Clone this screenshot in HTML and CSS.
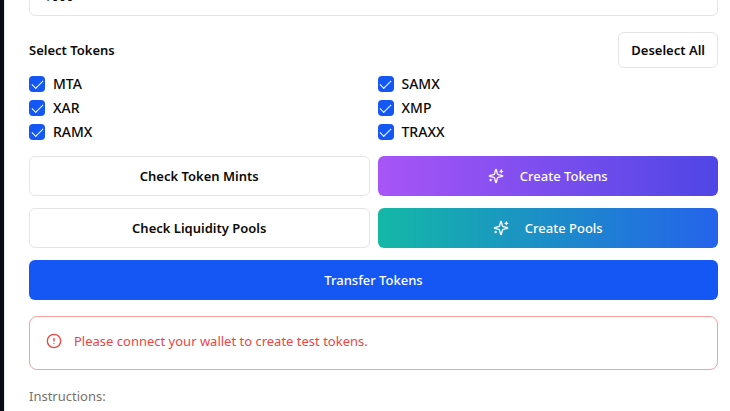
FILE: index.html
```html
<!DOCTYPE html>
<html lang="en">
<head>
<meta charset="utf-8">
<title>Test Tokens</title>
<link rel="stylesheet" href="styles.css">
</head>
<body>
<svg class="defs" aria-hidden="true">
  <symbol id="sparkles" viewBox="0 0 24 24">
    <path d="M9.937 15.5A2 2 0 0 0 8.5 14.063l-6.135-1.582a.5.5 0 0 1 0-.962L8.5 9.936A2 2 0 0 0 9.937 8.5l1.582-6.135a.5.5 0 0 1 .963 0L14.063 8.5A2 2 0 0 0 15.5 9.937l6.135 1.581a.5.5 0 0 1 0 .964L15.5 14.063a2 2 0 0 0-1.437 1.437l-1.582 6.135a.5.5 0 0 1-.963 0z"/>
    <path d="M20 3v4M22 5h-4M4 17v2M5 18H3"/>
  </symbol>
</svg>
<main class="card">
  <input class="amount" type="text" value="1000" aria-label="Amount">
  <section class="tokens">
    <div class="tokens-head">
      <h2 class="title">Select Tokens</h2>
      <button class="btn btn-small" type="button">Deselect All</button>
    </div>
    <div class="token-grid">
      <label class="token"><input class="check" type="checkbox" checked>MTA</label>
      <label class="token"><input class="check" type="checkbox" checked>SAMX</label>
      <label class="token"><input class="check" type="checkbox" checked>XAR</label>
      <label class="token"><input class="check" type="checkbox" checked>XMP</label>
      <label class="token"><input class="check" type="checkbox" checked>RAMX</label>
      <label class="token"><input class="check" type="checkbox" checked>TRAXX</label>
    </div>
  </section>
  <div class="actions">
    <button class="btn" type="button">Check Token Mints</button>
    <button class="btn btn-purple" type="button"><svg class="icon" aria-hidden="true"><use href="#sparkles"/></svg>Create Tokens</button>
    <button class="btn" type="button">Check Liquidity Pools</button>
    <button class="btn btn-teal" type="button"><svg class="icon" aria-hidden="true"><use href="#sparkles"/></svg>Create Pools</button>
    <button class="btn btn-primary" type="button">Transfer Tokens</button>
  </div>
  <div class="alert" role="alert">
    <svg class="icon" viewBox="0 0 24 24" aria-hidden="true"><circle cx="12" cy="12" r="10"/><path d="M12 8v4M12 16h.01"/></svg>
    <p class="alert-text">Please connect your wallet to create test tokens.</p>
  </div>
  <p class="instructions">Instructions:</p>
</main>
</body>
</html>
```
FILE: styles.css
```css
* {
  box-sizing: border-box;
}

body {
  margin: 0;
  padding-left: 4px;
  min-height: 100vh;
  display: flex;
  overflow: hidden;
  background: #0a0b14;
  color: #0c0a09;
  font-family: "Noto Sans", sans-serif;
  font-size: 13px;
  line-height: 20px;
}

.defs {
  position: absolute;
  width: 0;
  height: 0;
}

.card {
  flex: 1;
  min-width: 0;
  padding: 0 12px 0 24px;
  border-left: 1px solid #e5e7eb;
  background: #fff;
}

.amount {
  display: block;
  width: 100%;
  height: 40px;
  margin-top: -24px;
  padding: 0 14px;
  border: 1px solid #e5e5e5;
  border-radius: 6px;
  background: #fff;
  color: inherit;
  font: inherit;
}

.tokens {
  margin: 16px 0 12px;
}

.tokens-head {
  display: flex;
  align-items: center;
  justify-content: space-between;
  margin-bottom: 4px;
}

.title {
  margin: 0;
  font-size: 13px;
  font-weight: 600;
}

.token-grid {
  display: grid;
  grid-template-columns: 1fr 1fr;
  column-gap: 8px;
}

.token {
  display: flex;
  align-items: center;
  gap: 8px;
  height: 24px;
  font-size: 14px;
  font-weight: 500;
}

.check {
  appearance: none;
  width: 16px;
  height: 16px;
  margin: 0;
  border-radius: 4px;
  display: grid;
  place-items: center;
  background: #1457f5;
}

.check:checked::before {
  content: "";
  width: 10px;
  height: 5px;
  margin-bottom: 2px;
  border: solid #fff;
  border-width: 0 0 1px 1px;
  transform: rotate(-45deg);
}

.actions {
  display: grid;
  grid-template-columns: 1fr 1fr;
  gap: 12px 8px;
}

.btn {
  display: flex;
  align-items: center;
  justify-content: center;
  gap: 16px;
  height: 40px;
  padding: 0 12px;
  border: 1px solid #e5e5e5;
  border-radius: 6px;
  background: #fff;
  color: inherit;
  font: inherit;
  font-weight: 600;
}

.btn-small {
  height: 36px;
}

.btn-purple,
.btn-teal,
.btn-primary {
  border: 0;
  color: #fff;
  font-weight: 500;
}

.btn-purple {
  background: linear-gradient(to right, #a855f7, #4f46e5);
}

.btn-teal {
  background: linear-gradient(to right, #14b8a6, #2563eb);
}

.btn-primary {
  grid-column: 1 / -1;
  background: #1457f5;
}

.icon {
  flex: none;
  width: 16px;
  height: 16px;
  fill: none;
  stroke: currentColor;
  stroke-width: 2;
  stroke-linecap: round;
  stroke-linejoin: round;
}

.alert {
  display: flex;
  gap: 12px;
  height: 54px;
  margin-top: 16px;
  padding: 16px;
  border: 1px solid #f8a0a0;
  border-radius: 8px;
  color: #ef4444;
}

.alert-text {
  margin: 0;
  line-height: 16px;
}

.instructions {
  margin: 16px 0 0;
  color: #78716c;
}
```
